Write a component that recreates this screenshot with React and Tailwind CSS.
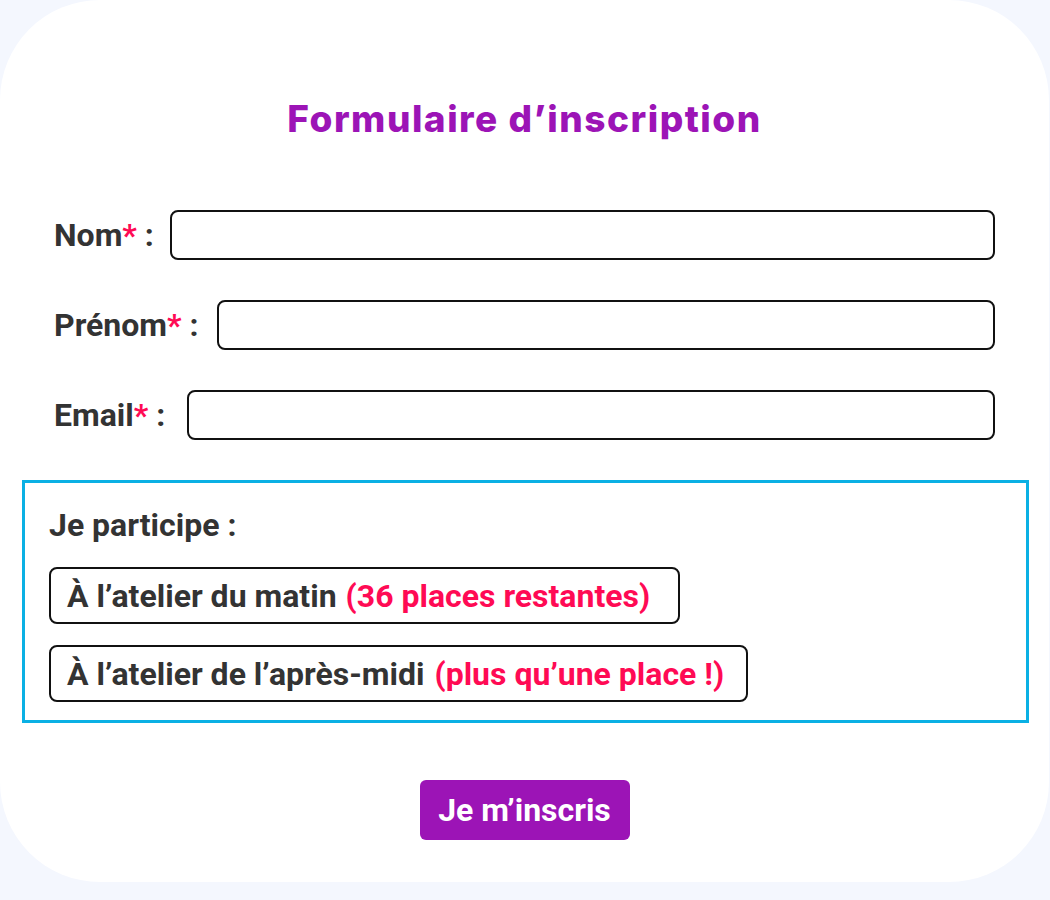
import React from 'react';

const Field = ({ label, gap }) => (
  <div className="flex items-center h-[50px]">
    <label className={`text-[32px] font-bold text-[#333333] whitespace-nowrap ${gap}`}>
      {label}
      <span className="text-[#ff0a54]">*</span> :
    </label>
    <input type="text" className="flex-1 h-[50px] border-2 border-[#111111] rounded-[8px] bg-white outline-none" />
  </div>
);

const Option = ({ text, extra, gap, width }) => (
  <div className={`self-start flex items-center h-[57px] pl-[16px] border-2 border-[#111111] rounded-[8px] text-[32px] font-bold ${width}`}>
    <span className="text-[#333333] whitespace-nowrap">{text}</span>
    <span className={`text-[#ff0a54] whitespace-nowrap ${gap}`}>{extra}</span>
  </div>
);

export default function App() {
  return (
    <div className="w-[1050px] h-[900px] bg-[#f4f7fe]" style={{ fontFamily: 'Roboto, "Liberation Sans", sans-serif' }}>
      <div className="w-[1049px] h-[882px] bg-white rounded-[100px] flex flex-col">
        {/* Title */}
        <h1
          className="text-center text-[37px] font-extrabold text-[#9c14b6] mt-[94px] leading-[50px] tracking-[1.5px]"
          style={{ fontFamily: 'Inter, "Noto Sans", sans-serif' }}
        >
          Formulaire d’inscription
        </h1>

        {/* Fields */}
        <div className="flex flex-col gap-[40px] mt-[66px] pl-[54px] pr-[54px]">
          <Field label="Nom" gap="mr-[16px]" />
          <Field label="Prénom" gap="mr-[18px]" />
          <Field label="Email" gap="mr-[22px]" />
        </div>

        {/* Workshops */}
        <div className="mt-[40px] ml-[22px] w-[1007px] h-[243px] border-[3px] border-[#0ab0e4] flex flex-col pl-[24px] pt-[22px]">
          <p className="text-[32px] font-bold text-[#333333] leading-[40px]">Je participe :</p>
          <div className="flex flex-col gap-[21px] mt-[22px]">
            <Option text="À l’atelier du matin" gap="ml-[9px]" width="w-[631px]" extra="(36 places restantes)" />
            <Option text="À l’atelier de l’après-midi" gap="ml-[10px]" width="w-[699px]" extra="(plus qu’une place !)" />
          </div>
        </div>

        {/* Submit */}
        <div className="flex justify-center mt-[57px]">
          <button className="w-[210px] h-[60px] bg-[#9c14b6] rounded-[6px] text-white text-[32px] font-bold">
            Je m’inscris
          </button>
        </div>
      </div>
    </div>
  );
}
